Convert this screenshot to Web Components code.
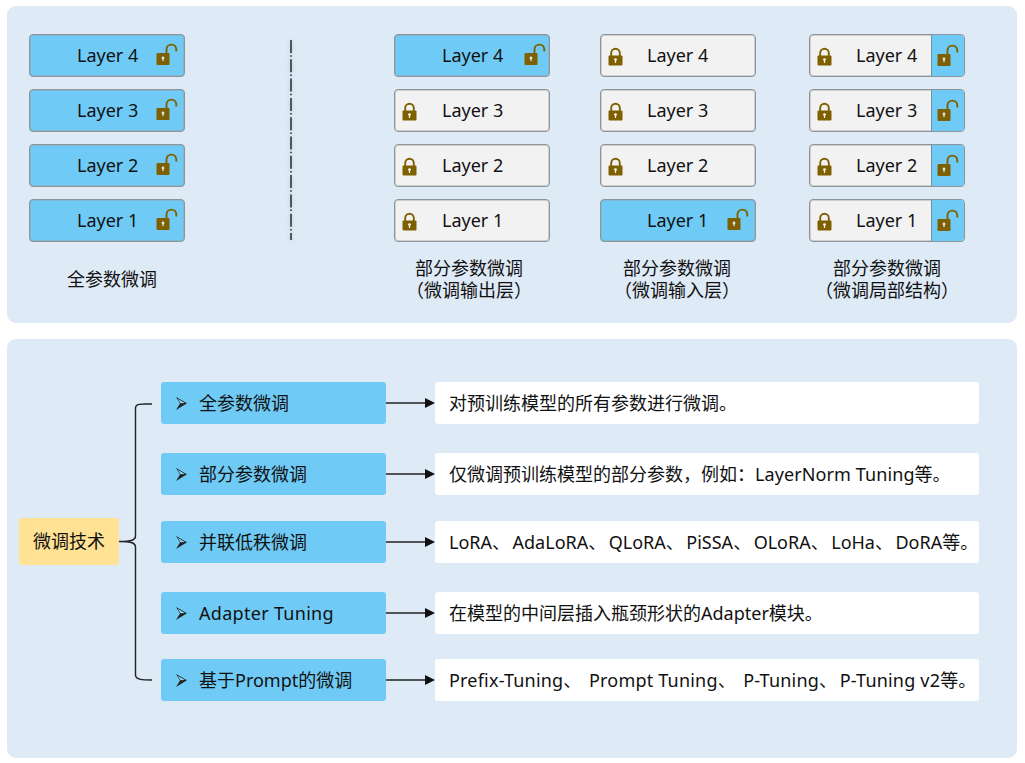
<!DOCTYPE html>
<html lang="zh-CN">
<head>
<meta charset="utf-8">
<title>微调技术</title>
<style>
html, body {
	margin: 0;
	padding: 0;
	background: #fff;
}
body {
	font-family: "Noto Sans", "Noto Sans CJK SC", sans-serif;
	font-size: 18px;
	color: #111;
}
.page {
	display: flex;
	flex-direction: column;
	gap: 16px;
	padding: 6px 8px 0 7px;
}
/* the enumeration comma sits wider in the reference than in Noto */
.c { margin-right: 2.5px; }
</style>
</head>
<body>
<div class="page">
	<panel-card style="height:317px;padding:28px 0 0 22px">
		<layer-column width="156" caption-shift="5">
			<layer-box n="4" mode="open"></layer-box>
			<layer-box n="3" mode="open"></layer-box>
			<layer-box n="2" mode="open"></layer-box>
			<layer-box n="1" mode="open"></layer-box>
			<span slot="caption">全参数微调</span>
		</layer-column>
		<dash-divider></dash-divider>
		<layer-column width="156" caption-shift="-3" style="margin-left:101px">
			<layer-box n="4" mode="open" style="--right:3px"></layer-box>
			<layer-box n="3" mode="locked"></layer-box>
			<layer-box n="2" mode="locked"></layer-box>
			<layer-box n="1" mode="locked"></layer-box>
			<span slot="caption">部分参数微调<br>（微调输出层）</span>
		</layer-column>
		<layer-column width="156" caption-shift="-1" style="margin-left:50px;--left:46px">
			<layer-box n="4" mode="locked"></layer-box>
			<layer-box n="3" mode="locked"></layer-box>
			<layer-box n="2" mode="locked"></layer-box>
			<layer-box n="1" mode="open"></layer-box>
			<span slot="caption">部分参数微调<br>（微调输入层）</span>
		</layer-column>
		<layer-column width="156" style="margin-left:53px;--left:46px">
			<layer-box n="4" mode="split"></layer-box>
			<layer-box n="3" mode="split"></layer-box>
			<layer-box n="2" mode="split"></layer-box>
			<layer-box n="1" mode="split"></layer-box>
			<span slot="caption">部分参数微调<br>（微调局部结构）</span>
		</layer-column>
	</panel-card>
	<panel-card style="height:419px;padding:43px 0 0 12px">
		<tech-tree label="微调技术">
			<tech-row name="全参数微调">对预训练模型的所有参数进行微调。</tech-row>
			<tech-row name="部分参数微调" style="margin-top:29px">仅微调预训练模型的部分参数，例如：<span style="letter-spacing:.1px">LayerNorm Tuning</span>等。</tech-row>
			<tech-row name="并联低秩微调" style="margin-top:26px">LoRA<span class="c">、</span>AdaLoRA<span class="c">、</span>QLoRA<span class="c">、</span>PiSSA<span class="c">、</span>OLoRA<span class="c">、</span>LoHa<span class="c">、</span>DoRA等。</tech-row>
			<tech-row name="Adapter Tuning" spacing=".3px" style="margin-top:29px">在模型的中间层插入瓶颈形状的Adapter模块。</tech-row>
			<tech-row name="基于Prompt的微调" style="margin-top:25px"><span style="letter-spacing:.2px">Prefix-Tuning<span class="c">、</span> Prompt Tuning<span class="c">、</span> P-Tuning<span class="c">、</span>P-Tuning v2</span>等。</tech-row>
		</tech-tree>
	</panel-card>
</div>

<script>
const lockColor = "#7f6000"

const lockedSvg = `
<svg width="15" height="19" viewBox="0 0 15 19">
	<path d="M3.2 9V6a4.3 4.3 0 0 1 8.6 0v3" fill="none" stroke="${lockColor}" stroke-width="1.9"/>
	<rect x="0.5" y="8.5" width="14" height="10" rx="1" fill="${lockColor}"/>
	<circle cx="7.500" cy="12.6" r="1.4" fill="#f2f2f2"/>
	<rect x="6.9" y="12.8" width="1.2" height="3.2" fill="#f2f2f2"/>
</svg>`

const openSvg = `
<svg width="22" height="23" viewBox="0 0 22 23">
	<path d="M10.5 11V6.500a4.9 4.9 0 0 1 9.8 0v2" fill="none" stroke="${lockColor}" stroke-width="1.9"/>
	<rect x="0.5" y="10" width="13" height="12" rx="1" fill="${lockColor}"/>
	<circle cx="7" cy="15" r="1.4" fill="#d8e6ee"/>
	<rect x="6.4" y="15.2" width="1.2" height="3" fill="#d8e6ee"/>
</svg>`

class PanelCard extends HTMLElement {
	constructor() {
		super()
		this.attachShadow({ mode: "open" })
		this.shadowRoot.innerHTML = `
<style>
:host {
	display: flex;
	box-sizing: border-box;
	background: #deeaf6;
	border-radius: 9px;
}
</style>
<slot></slot>`
	}
}

class LayerBox extends HTMLElement {
	constructor() {
		super()
		this.attachShadow({ mode: "open" })
		const mode = this.getAttribute("mode")
		const n = this.getAttribute("n")
		const left = mode === "open" ? "" : lockedSvg
		const right = mode === "locked" ? "" : openSvg
		this.shadowRoot.innerHTML = `
<style>
:host {
	display: flex;
	box-sizing: border-box;
	height: 43px;
	align-items: stretch;
	border: 1px solid #8f9498;
	border-radius: 4px;
	box-shadow: inset 0 0 0 1px rgba(150, 155, 160, .4);
	background: ${mode === "open" ? "#6fcbf6" : "#f2f2f2"};
	overflow: hidden;
}
.left {
	box-sizing: border-box;
	flex: none;
	width: var(--left, 47px);
	padding-left: 7px;
	display: flex;
	align-items: center;
}
.left svg { margin-top: 1px; }
.text {
	line-height: 41px;
	white-space: nowrap;
}
.right {
	margin-left: auto;
	display: flex;
	align-items: center;
	box-sizing: border-box;
	padding: 0 var(--right, 6px) 0 5px;
}
.right svg { margin-bottom: ${mode === "split" ? 0 : 2}px; }
:host([mode="split"]) .right {
	width: 33px;
	padding: 0 0 0 5px;
	background: #6fcbf6;
	border-left: 1px solid #6d8fa3;
}
</style>
<div class="left">${left}</div>
<div class="text">Layer ${n}</div>
<div class="right">${right}</div>`
	}
}

class LayerColumn extends HTMLElement {
	constructor() {
		super()
		this.attachShadow({ mode: "open" })
		const width = this.getAttribute("width")
		const shift = this.getAttribute("caption-shift") || 0
		this.shadowRoot.innerHTML = `
<style>
:host {
	display: flex;
	flex-direction: column;
	flex: none;
	width: ${width}px;
}
.stack {
	display: flex;
	flex-direction: column;
	gap: 12px;
}
.caption {
	height: 44px;
	margin-top: 15px;
	margin-left: ${shift * 2}px;
	display: flex;
	align-items: center;
	justify-content: center;
	text-align: center;
	line-height: 22px;
	white-space: nowrap;
}
</style>
<div class="stack"><slot></slot></div>
<div class="caption"><div><slot name="caption"></slot></div></div>`
	}
}

class DashDivider extends HTMLElement {
	constructor() {
		super()
		this.attachShadow({ mode: "open" })
		this.shadowRoot.innerHTML = `
<style>
:host {
	display: block;
	flex: none;
	width: 4px;
	height: 204px;
	margin: 6px 0 0 104px;
}
svg { display: block; filter: drop-shadow(0 1px 2px rgba(80, 90, 110, .3)); }
</style>
<svg width="4" height="204" viewBox="0 0 4 204">
	<line x1="2" y1="0" x2="2" y2="200" stroke="#1c1c1c" stroke-width="1.4" stroke-dasharray="13 2.200 1.500 2.600"/>
</svg>`
	}
}

class TechRow extends HTMLElement {
	constructor() {
		super()
		this.attachShadow({ mode: "open" })
		this.shadowRoot.innerHTML = `
<style>
:host {
	display: flex;
	height: 42px;
	line-height: 42px;
	white-space: nowrap;
}
.name, .desc {
	box-sizing: border-box;
	border-radius: 3px;
	display: flex;
	align-items: center;
}
.name {
	flex: none;
	width: 225px;
	padding-left: 15px;
	background: #6fcbf6;
}
.name svg { flex: none; margin-right: 12px; }
.arrow { flex: none; align-self: center; display: block; }
.desc {
	flex: none;
	display: block;
	width: 544px;
	padding-left: 14px;
	background: #fff;
}
</style>
<div class="name">
	<svg width="11" height="13" viewBox="0 0 11 13">
		<path d="M0 0 L11 6.2 L0 13 L4 6.500 Z" fill="#222"/>
		<path d="M1.6 1.7 L9 6 L4.6 6.2 Z" fill="#8fd6f8"/>
	</svg>
	<span data-name></span>
</div>
<svg class="arrow" width="49" height="12" viewBox="0 0 49 12">
	<line x1="0" y1="6" x2="40" y2="6" stroke="#222" stroke-width="1.5"/>
	<path d="M39 1 L49 6 L39 11 Z" fill="#111"/>
</svg>
<div class="desc"><slot></slot></div>`
		const name = this.shadowRoot.querySelector("[data-name]")
		name.textContent = this.getAttribute("name")
		name.style.letterSpacing = this.getAttribute("spacing") || "normal"
	}
}

class TechTree extends HTMLElement {
	constructor() {
		super()
		this.attachShadow({ mode: "open" })
		this.shadowRoot.innerHTML = `
<style>
:host {
	display: flex;
	align-items: center;
	height: 319px;
}
.root {
	flex: none;
	width: 100px;
	height: 47px;
	line-height: 47px;
	text-align: center;
	background: #ffe293;
	border-radius: 3px;
}
.brace { flex: none; display: block; }
.rows {
	display: flex;
	flex-direction: column;
}
</style>
<div class="root" data-label></div>
<svg class="brace" width="42" height="319" viewBox="0 0 42 319">
	<path d="M33 22 C24 22 16.500 21 16.500 26 V154 C16.500 158 13 159.500 0 159.500 C13 159.500 16.500 161 16.500 165 V293 C16.500 298 24 298 33 298" fill="none" stroke="#222" stroke-width="1.4"/>
</svg>
<div class="rows"><slot></slot></div>`
		this.shadowRoot.querySelector("[data-label]").textContent =
			this.getAttribute("label")
	}
}

customElements.define("panel-card", PanelCard)
customElements.define("layer-box", LayerBox)
customElements.define("layer-column", LayerColumn)
customElements.define("dash-divider", DashDivider)
customElements.define("tech-row", TechRow)
customElements.define("tech-tree", TechTree)
</script>
</body>
</html>
